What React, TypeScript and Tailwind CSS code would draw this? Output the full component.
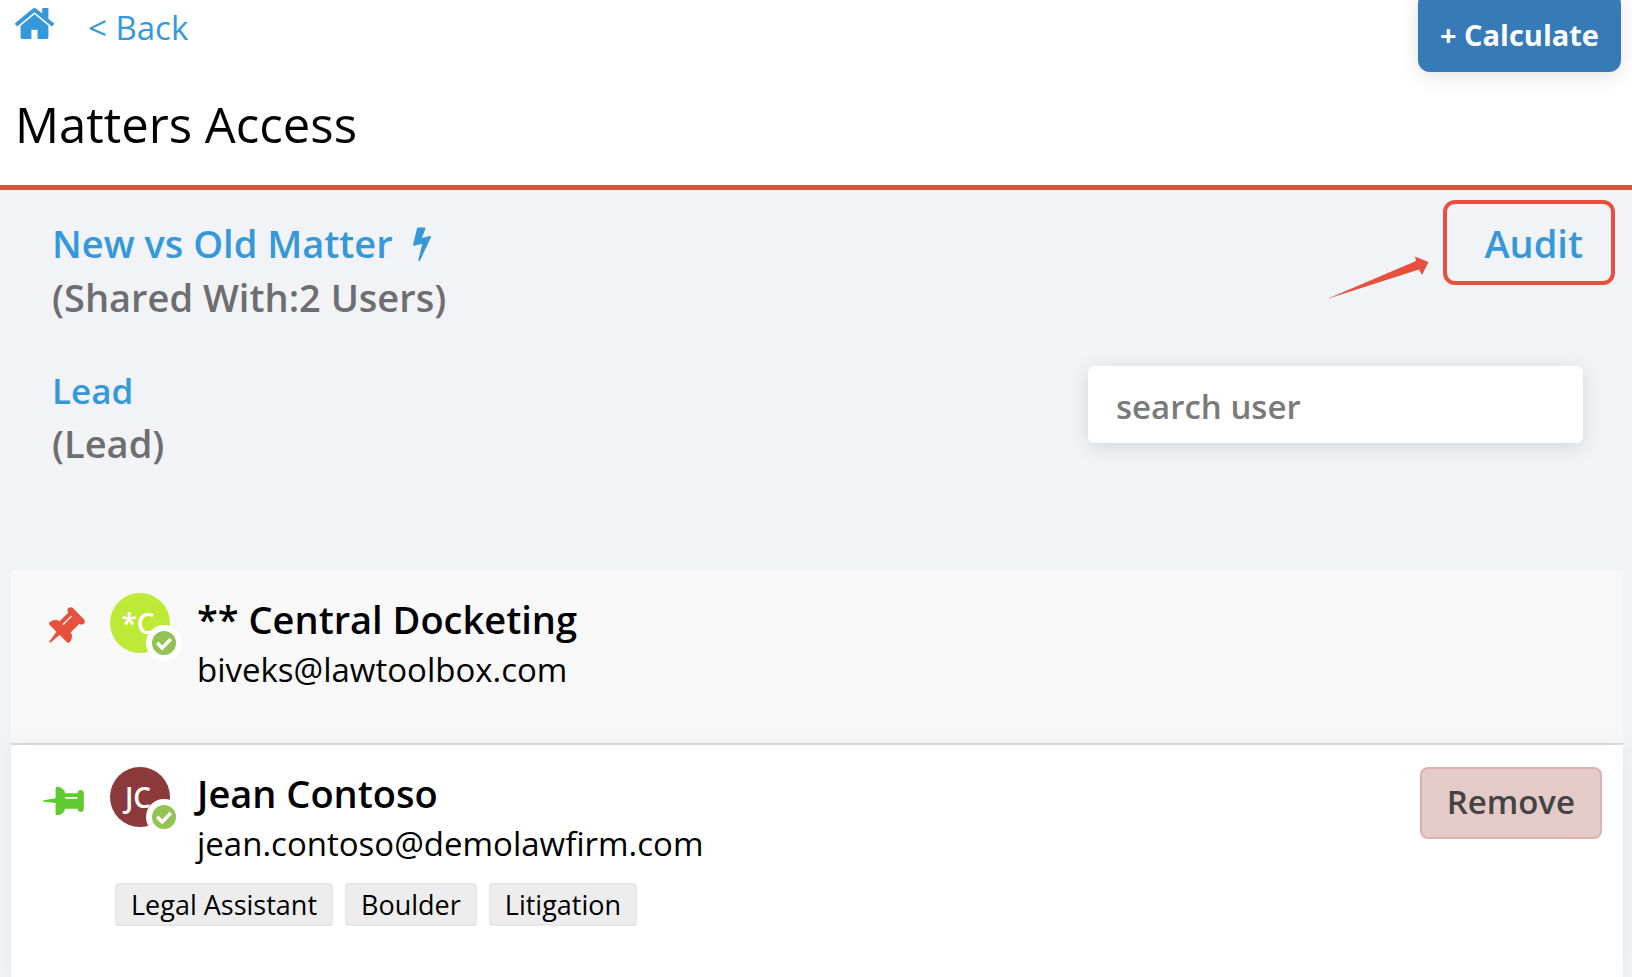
import { clsx } from "clsx"

interface User {
  name: string
  email: string
  initials: string
  avatarColor: string
  pinned: boolean
  tags: string[]
}

const users: User[] = [
  {
    name: "** Central Docketing",
    email: "biveks@lawtoolbox.com",
    initials: "*C",
    avatarColor: "bg-[#bdea37]",
    pinned: true,
    tags: [],
  },
  {
    name: "Jean Contoso",
    email: "jean.contoso@demolawfirm.com",
    initials: "JC",
    avatarColor: "bg-[#8b393b]",
    pinned: false,
    tags: ["Legal Assistant", "Boulder", "Litigation"],
  },
]

function HomeIcon({ className }: { className?: string }) {
  return (
    <svg viewBox="89 253 1614 1283" fill="currentColor" className={className} aria-hidden="true">
      <path d="M1472 992v480q0 26-19 45t-45 19h-384v-384h-256v384h-384q-26 0-45-19t-19-45v-480q0-1 .5-3t.5-3l575-474 575 474q1 2 1 6zm223-69l-62 74q-8 9-21 11h-3q-13 0-21-7l-692-577-692 577q-12 8-24 7-13-2-21-11l-62-74q-8-10-7-23.5t11-21.5l719-599q32-26 76-26t76 26l244 204v-195q0-14 9-23t23-9h192q14 0 23 9t9 23v408l219 182q10 8 11 21.5t-7 23.5z" />
    </svg>
  )
}

function BoltIcon({ className }: { className?: string }) {
  return (
    <svg viewBox="448 0 896 1792" fill="currentColor" className={className} aria-hidden="true">
      <path d="M1333 566q18 20 7 44l-540 1157q-13 25-42 25-4 0-14-2-17-5-25.5-19t-4.5-30l197-808-406 101q-4 1-12 1-18 0-31-11-18-15-13-39l201-825q4-14 16-23t28-9h328q19 0 32 12.5t13 29.5q0 8-5 18l-171 463 396-98q8-2 12-2 19 0 34 15z" />
    </svg>
  )
}

function PinIcon({ className }: { className?: string }) {
  return (
    <svg viewBox="0 0 1792 1792" fill="currentColor" className={className} aria-hidden="true">
      <path d="M800 864v-448q0-14-9-23t-23-9-23 9-9 23v448q0 14 9 23t23 9 23-9 9-23zm672 352q0 26-19 45t-45 19h-429l-51 483q-2 12-10.5 20.5t-20.5 8.5h-1q-27 0-32-27l-76-485h-404q-26 0-45-19t-19-45q0-123 78.5-221.5t177.5-98.5v-512q-52 0-90-38t-38-90 38-90 90-38h640q52 0 90 38t38 90-38 90-90 38v512q99 0 177.5 98.5t78.5 221.5z" />
    </svg>
  )
}

function Avatar({ user }: { user: User }) {
  return (
    <div
      className={clsx(
        "relative flex size-15 shrink-0 items-center justify-center rounded-full pr-1 text-[28px] font-semibold text-white",
        user.avatarColor
      )}
    >
      {user.initials}
      {/* presence badge */}
      <span className="absolute -right-3 -bottom-2 flex size-9 items-center justify-center rounded-full bg-white">
        <svg viewBox="0 0 24 24" className="size-6" aria-hidden="true">
          <circle cx="12" cy="12" r="12" fill="#92c353" />
          <path d="M5.200 11.800l5 5.200 8.600-9" fill="none" stroke="#fff" strokeWidth="3.4" />
        </svg>
      </span>
    </div>
  )
}

function UserRow({ user }: { user: User }) {
  return (
    <li
      className={clsx(
        "min-h-[174px] pt-[22px] pr-[21px] pl-8",
        user.pinned
          ? "border-b-2 border-[#dcdcdc] bg-[#f8f8f8]"
          : "grow bg-white shadow-[0_0_20px_rgba(0,0,0,0.06)]"
      )}
    >
      <div className="flex items-start">
        <button type="button" aria-label={user.pinned ? "Unpin user" : "Pin user"} className="mt-3 mr-[23px] shrink-0">
          <PinIcon className={clsx("size-11", user.pinned ? "rotate-45 text-[#e94f3d]" : "rotate-90 text-[#60cb31]")} />
        </button>
        <Avatar user={user} />
        <div className="grow pl-[27px]">
          <h2 className="text-[38px] leading-[52px] font-semibold">{user.name}</h2>
          <p className="text-[33px] leading-[50px]">{user.email}</p>
        </div>
        {!user.pinned && (
          <button
            type="button"
            className="h-[72px] rounded-lg border-2 border-[#deb0ae] bg-[#e5caca] px-[25px] pb-1 text-[33px] leading-none font-semibold text-[#444]"
          >
            Remove
          </button>
        )}
      </div>
      {user.tags.length > 0 && (
        <ul className="mt-3.5 ml-[72px] flex gap-3">
          {user.tags.map((tag) => (
            <li
              key={tag}
              className="rounded-sm border-2 border-[#e6e6e6] bg-[#ededed] px-3.5 text-[27px] leading-[39px]"
            >
              {tag}
            </li>
          ))}
        </ul>
      )}
    </li>
  )
}

export default function App() {
  return (
    <div className="flex min-h-screen flex-col bg-[#f1f3f7] font-['Open_Sans',sans-serif] text-black">
      <header className="border-b-5 border-[#e94f3d] bg-white pr-[11px] pl-[15px]">
        <div className="flex items-start justify-between">
          <nav className="flex items-start gap-[34px] text-[#3498db]">
            <a href="#home" aria-label="Home" className="pt-2">
              <HomeIcon className="w-[39px]" />
            </a>
            <a href="#back" className="pt-1 text-[33px] leading-[48px]">
              &lt; Back
            </a>
          </nav>
          <button
            type="button"
            className="-mt-2 h-20 rounded-xl bg-[#367ab7] px-[22px] pt-1 text-[29px] leading-none font-bold text-white shadow-[0_4px_20px_rgba(0,0,0,0.12)]"
          >
            + Calculate
          </button>
        </div>
        <h1 className="pt-[18px] pb-[27px] text-[49px] leading-[68px]">Matters Access</h1>
      </header>

      <section className="flex items-start justify-between pt-[26px] pr-[49px] pb-[102px] pl-[52px] font-semibold text-[#6d6e71]">
        <div className="text-[38px] leading-[54px]">
          <a href="#matter" className="flex items-center gap-5 text-[#3498db]">
            New vs Old Matter
            <BoltIcon className="h-9" />
          </a>
          <p>(Shared With:2 Users)</p>
          <div className="pt-[41px] leading-[52px]">
            <a href="#lead" className="block text-[35px] text-[#3498db]">
              Lead
            </a>
            <p>(Lead)</p>
          </div>
        </div>

        <div className="flex flex-col items-end">
          <div className="relative text-[38px] leading-[54px]">
            <a href="#audit" className="text-[#3498db]">
              Audit
            </a>
            {/* callout around the audit link */}
            <span className="pointer-events-none absolute -top-4 -right-8 -bottom-[15px] -left-[41px] rounded-xl border-4 border-[#e6503c]" />
            <svg viewBox="0 0 102 45" className="absolute top-10 right-[154px] h-[45px] w-[102px]" aria-hidden="true">
              <path d="M0 43L89 5L88 0.500L101.500 6L95 19L92 13.500Z" fill="#e6503c" />
            </svg>
          </div>
          <input
            type="search"
            aria-label="search user"
            placeholder="search user"
            className="mt-24 h-[77px] w-[495px] rounded-md bg-white px-7 pt-1 text-[33px] font-semibold shadow-[0_4px_20px_rgba(0,0,0,0.12)] placeholder:text-[#7a7a7a]"
          />
        </div>
      </section>

      <ul className="mr-[9px] ml-[11px] flex grow flex-col">
        {users.map((user) => (
          <UserRow key={user.email} user={user} />
        ))}
      </ul>
    </div>
  )
}
